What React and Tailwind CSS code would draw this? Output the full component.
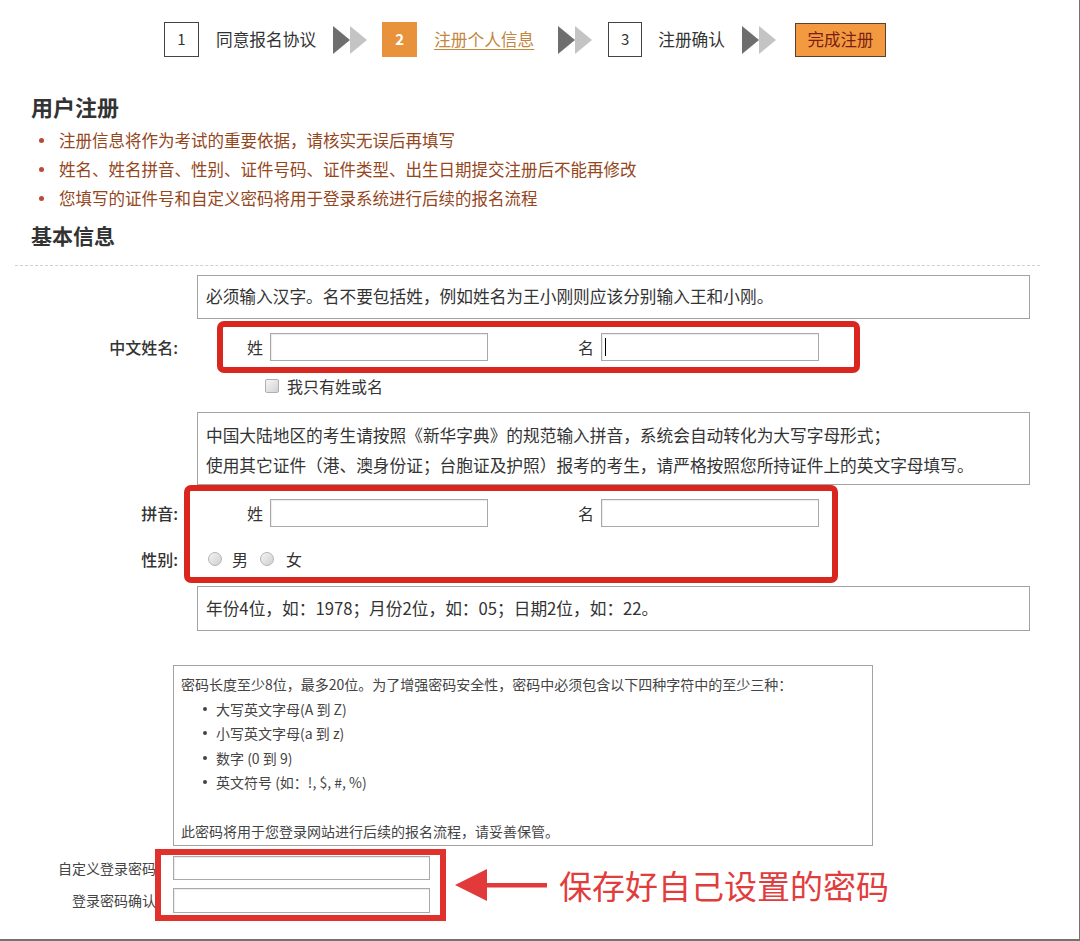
import React from "react";

const StepArrow = ({ className = "" }) => (
  <svg width="34" height="28" viewBox="0 0 34 28" className={"shrink-0 " + className}>
    <polygon points="0,0 17,14 0,28" fill="#6e6e6e" />
    <polygon points="17,0 34,14 17,28" fill="#c4c4c4" />
  </svg>
);

const TextInput = ({ className = "", caret = false }) => (
  <div className={"relative border border-[#a9a9a9] bg-white shadow-[inset_1px_1px_1px_rgba(0,0,0,0.08)] " + className}>
    {caret && <span className="absolute left-[3px] top-[4px] bottom-[4px] w-px bg-black"></span>}
  </div>
);

const Radio = () => (
  <span className="inline-block w-[14px] h-[14px] rounded-full border border-[#b5b5b5] bg-gradient-to-br from-[#f4f4f4] to-[#cfcfcf]"></span>
);

const HintBox = ({ className = "", children }) => (
  <div className={"w-[833px] border border-[#a3a3a3] px-[8px] text-[16.7px] text-[#333]" + " " + className}>{children}</div>
);

export default function App() {
  return (
    <div className="w-[1080px] h-[941px] bg-white border-r border-b-2 border-[#737373] overflow-hidden font-['Noto_Sans_CJK_SC','Noto_Sans',sans-serif] text-[#333]">
      {/* Steps */}
      <div className="flex items-center pt-[22px] pl-[164px] h-[35px] box-content">
        <div className="w-[35px] h-[35px] border border-[#444] flex items-center justify-center text-[15px]">1</div>
        <span className="ml-[17px] text-[16.7px]">同意报名协议</span>
        <StepArrow className="ml-[17px]" />
        <div className="ml-[15px] w-[35px] h-[35px] bg-[#e8923c] flex items-center justify-center text-[15px] font-bold text-white">2</div>
        <span className="ml-[17px] text-[16.7px] text-[#c2873f] underline underline-offset-[3px]">注册个人信息</span>
        <StepArrow className="ml-[24px]" />
        <div className="ml-[16px] w-[34px] h-[35px] border border-[#444] flex items-center justify-center text-[15px]">3</div>
        <span className="ml-[16px] text-[16.7px]">注册确认</span>
        <StepArrow className="ml-[17px]" />
        <div className="ml-[19px] w-[91px] h-[34px] bg-[#f39a40] border border-[#5a4030] flex items-center justify-center text-[16.5px] text-[#7a1e14]">完成注册</div>
      </div>

      {/* Intro */}
      <div className="pl-[31px] mt-[35px]">
        <h2 className="text-[22px] leading-[28px] font-bold text-[#333]">用户注册</h2>
        <ul className="mt-[6px] text-[16.5px] leading-[29px] text-[#94461c]">
          <li className="flex items-center"><span className="w-[5px] h-[5px] rounded-full bg-[#b74a3a] ml-[8px] mr-[15px]"></span>注册信息将作为考试的重要依据，请核实无误后再填写</li>
          <li className="flex items-center"><span className="w-[5px] h-[5px] rounded-full bg-[#b74a3a] ml-[8px] mr-[15px]"></span>姓名、姓名拼音、性别、证件号码、证件类型、出生日期提交注册后不能再修改</li>
          <li className="flex items-center"><span className="w-[5px] h-[5px] rounded-full bg-[#b74a3a] ml-[8px] mr-[15px]"></span>您填写的证件号和自定义密码将用于登录系统进行后续的报名流程</li>
        </ul>
        <h2 className="mt-[8px] text-[21px] leading-[28px] font-bold text-[#333]">基本信息</h2>
      </div>
      <div className="mt-[16px] ml-[15px] w-[1025px] border-t border-dashed border-[#d0d0d0]"></div>

      {/* Chinese name */}
      <div className="mt-[9px] pl-[197px]">
        <HintBox className="h-[44px] flex items-center">必须输入汉字。名不要包括姓，例如姓名为王小刚则应该分别输入王和小刚。</HintBox>
      </div>
      <div className="relative flex items-center h-[56px]">
        <div className="w-[197px] pr-[19px] text-right text-[16px] font-medium">中文姓名:</div>
        <div className="flex items-center">
          <span className="ml-[50px] mr-[7px] text-[16px]">姓</span>
          <TextInput className="w-[218px] h-[28px]" />
          <span className="ml-[90px] mr-[7px] text-[16px]">名</span>
          <TextInput className="w-[218px] h-[28px]" caret />
        </div>
        <div className="absolute left-[217px] top-[2px] w-[643px] h-[52px] border-[6px] border-[#d9261f] rounded-[7px]"></div>
      </div>
      <div className="flex items-center h-[22px] pl-[265px]">
        <span className="w-[14px] h-[14px] border border-[#b0b0b0] rounded-[2px] bg-gradient-to-br from-[#f6f6f6] to-[#d2d2d2]"></span>
        <span className="ml-[8px] text-[16px]">我只有姓或名</span>
      </div>

      {/* Pinyin */}
      <div className="mt-[15px] pl-[197px]">
        <HintBox className="h-[73px] pt-[7px] leading-[30px]">
          <p>中国大陆地区的考生请按照《新华字典》的规范输入拼音，系统会自动转化为大写字母形式；</p>
          <p>使用其它证件（港、澳身份证；台胞证及护照）报考的考生，请严格按照您所持证件上的英文字母填写。</p>
        </HintBox>
      </div>
      <div className="relative">
        <div className="flex items-center h-[56px]">
          <div className="w-[197px] pr-[19px] text-right text-[16px] font-medium">拼音:</div>
          <span className="ml-[50px] mr-[7px] text-[16px]">姓</span>
          <TextInput className="w-[218px] h-[28px]" />
          <span className="ml-[90px] mr-[7px] text-[16px]">名</span>
          <TextInput className="w-[218px] h-[28px]" />
        </div>
        <div className="flex items-center h-[36px]">
          <div className="w-[197px] pr-[19px] text-right text-[16px] font-medium">性别:</div>
          <span className="ml-[11px]"><Radio /></span>
          <span className="ml-[10px] text-[16px]">男</span>
          <span className="ml-[12px]"><Radio /></span>
          <span className="ml-[12px] text-[16px]">女</span>
        </div>
        <div className="absolute left-[184px] top-0 w-[654px] h-[98px] border-[6px] border-[#d9261f] rounded-[7px]"></div>
      </div>

      {/* Birth date */}
      <div className="mt-[9px] pl-[197px]">
        <HintBox className="h-[45px] flex items-center">年份4位，如：1978；月份2位，如：05；日期2位，如：22。</HintBox>
      </div>

      {/* Password */}
      <div className="mt-[34px] ml-[173px] w-[700px] h-[181px] border border-[#a3a3a3] px-[7px] pt-[6px] text-[14px] leading-[24.5px] text-[#444]">
        <p>密码长度至少8位，最多20位。为了增强密码安全性，密码中必须包含以下四种字符中的至少三种：</p>
        <ul className="pl-[22px]">
          <li className="flex items-center"><span className="w-[4px] h-[4px] rounded-full bg-[#444] mr-[9px]"></span>大写英文字母(A 到 Z)</li>
          <li className="flex items-center"><span className="w-[4px] h-[4px] rounded-full bg-[#444] mr-[9px]"></span>小写英文字母(a 到 z)</li>
          <li className="flex items-center"><span className="w-[4px] h-[4px] rounded-full bg-[#444] mr-[9px]"></span>数字 (0 到 9)</li>
          <li className="flex items-center"><span className="w-[4px] h-[4px] rounded-full bg-[#444] mr-[9px]"></span>英文符号 (如：!, $, #, %)</li>
        </ul>
        <p className="mt-[24.5px]">此密码将用于您登录网站进行后续的报名流程，请妥善保管。</p>
      </div>
      <div className="relative flex items-center mt-[10px]">
        <div className="flex flex-col gap-[8px]">
          <div className="flex items-center">
            <span className="w-[173px] pr-[3px] text-right text-[14px] text-[#444]">自定义登录密码：</span>
            <TextInput className="w-[257px] h-[24px]" />
          </div>
          <div className="flex items-center">
            <span className="w-[173px] pr-[3px] text-right text-[14px] text-[#444]">登录密码确认：</span>
            <TextInput className="w-[257px] h-[25px]" />
          </div>
        </div>
        <div className="ml-[25px] flex items-center">
          <svg width="92" height="34" viewBox="0 0 92 34">
            <polygon points="0,17 32,1 32,33" fill="#e23a3a" />
            <rect x="30" y="15" width="62" height="4.5" fill="#e23a3a" />
          </svg>
          <span className="ml-[12px] text-[33px] leading-[40px] text-[#e23d3d]">保存好自己设置的密码</span>
        </div>
        <div className="absolute left-[155px] top-[-7px] w-[291px] h-[72px] border-[6px] border-[#e0312d]"></div>
      </div>
    </div>
  );
}
